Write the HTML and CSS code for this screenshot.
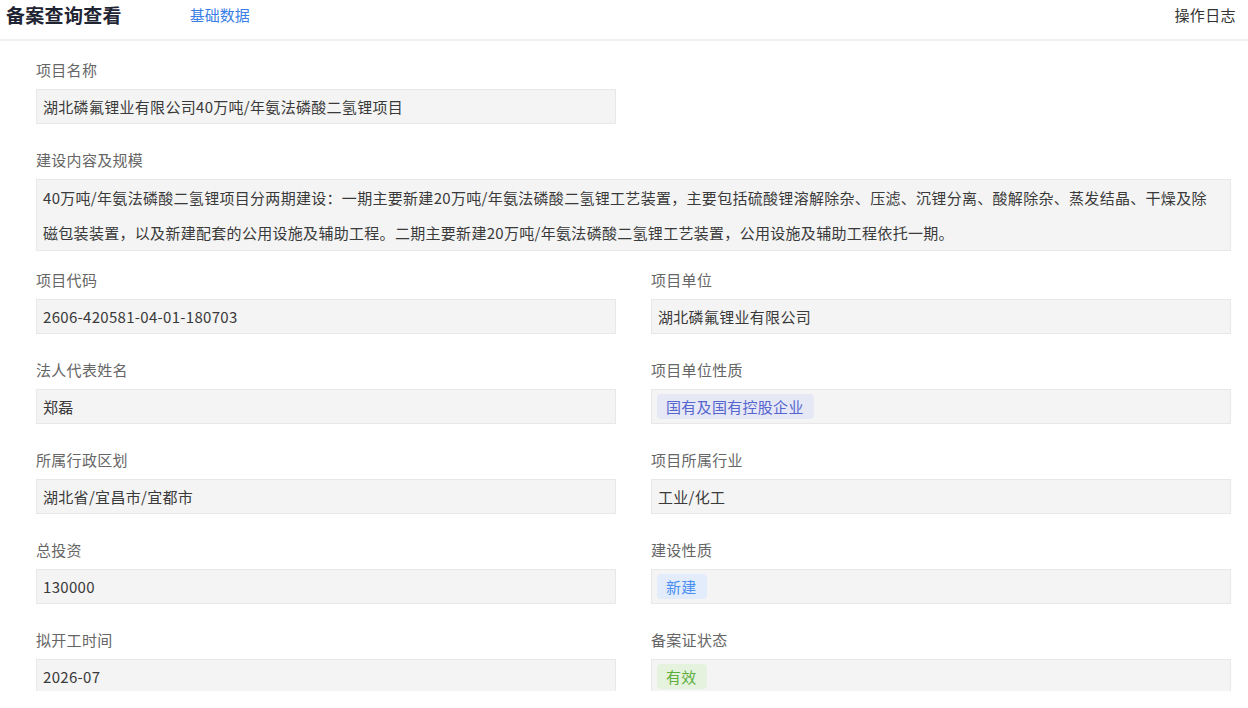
FILE: index.html
```html
<!DOCTYPE html>
<html lang="zh-CN">
<head>
    <meta charset="UTF-8">
    <title>备案查询查看</title>
    <link rel="stylesheet" href="styles.css">
</head>
<body>
<div class="page">
    <!--顶部栏-->
    <div class="top">
        <span class="title">备案查询查看</span>
        <span class="tab">基础数据</span>
        <span class="log">操作日志</span>
    </div>
    <!--内容-->
    <div class="content">
        <div class="form">
            <div class="field wide">
                <div class="label">项目名称</div>
                <div class="box half">湖北磷氟锂业有限公司40万吨/年氨法磷酸二氢锂项目</div>
            </div>
            <div class="field full desc">
                <div class="label">建设内容及规模</div>
                <div class="box text">40万吨/年氨法磷酸二氢锂项目分两期建设：一期主要新建20万吨/年氨法磷酸二氢锂工艺装置，主要包括硫酸锂溶解除杂、压滤、沉锂分离、酸解除杂、蒸发结晶、干燥及除磁包装装置，以及新建配套的公用设施及辅助工程。二期主要新建20万吨/年氨法磷酸二氢锂工艺装置，公用设施及辅助工程依托一期。</div>
            </div>
            <div class="field">
                <div class="label">项目代码</div>
                <div class="box">2606-420581-04-01-180703</div>
            </div>
            <div class="field">
                <div class="label">项目单位</div>
                <div class="box">湖北磷氟锂业有限公司</div>
            </div>
            <div class="field">
                <div class="label">法人代表姓名</div>
                <div class="box">郑磊</div>
            </div>
            <div class="field">
                <div class="label">项目单位性质</div>
                <div class="box"><span class="tag purple">国有及国有控股企业</span></div>
            </div>
            <div class="field">
                <div class="label">所属行政区划</div>
                <div class="box">湖北省/宜昌市/宜都市</div>
            </div>
            <div class="field">
                <div class="label">项目所属行业</div>
                <div class="box">工业/化工</div>
            </div>
            <div class="field">
                <div class="label">总投资</div>
                <div class="box">130000</div>
            </div>
            <div class="field">
                <div class="label">建设性质</div>
                <div class="box"><span class="tag blue">新建</span></div>
            </div>
            <div class="field">
                <div class="label">拟开工时间</div>
                <div class="box">2026-07</div>
            </div>
            <div class="field">
                <div class="label">备案证状态</div>
                <div class="box"><span class="tag green">有效</span></div>
            </div>
        </div>
    </div>
</div>
</body>
</html>
```

FILE: styles.css
```css
body, div, span {
    margin: 0;
    padding: 0;
}

body {
    background: #fff;
    font-family: "Microsoft YaHei", "Noto Sans CJK SC", "Noto Sans", sans-serif;
    color: #333;
}

.page {
    width: 1248px;
    height: 708px;
    overflow: hidden;
}

.top {
    height: 30px;
    line-height: 30px;
    padding: 0 12px 9px 6px;
    border-bottom: 2px solid #f2f2f2;
    display: flex;
    align-items: center;
}

.top .title {
    font-size: 19px;
    font-weight: bold;
    color: #1f2533;
    letter-spacing: 0.3px;
}

.top .tab {
    margin-left: 68px;
    font-size: 15px;
    color: #3b7fe6;
}

.top .log {
    margin-left: auto;
    font-size: 15px;
    color: #333;
    letter-spacing: 0.4px;
}

.content {
    height: 650px;
    overflow: hidden;
    padding: 19px 17px 0 36px;
    box-sizing: border-box;
}

.form {
    display: grid;
    grid-template-columns: 580px 580px;
    column-gap: 35px;
}

.field {
    margin-bottom: 26px;
}

.field.wide,
.field.full {
    grid-column: 1 / 3;
}

.field.desc {
    margin-bottom: 19px;
}

.label {
    height: 20px;
    line-height: 20px;
    font-size: 15px;
    color: #666;
    letter-spacing: 0.3px;
    margin-bottom: 9px;
}

.box {
    height: 35px;
    line-height: 33px;
    box-sizing: border-box;
    border: 1px solid #e8e8e8;
    background: #f4f4f4;
    padding-left: 6px;
    font-size: 15px;
    color: #3a3a3a;
    letter-spacing: 0.3px;
    white-space: nowrap;
    overflow: hidden;
}

.box.half {
    width: 580px;
}

.box.text {
    height: auto;
    line-height: 35px;
    white-space: normal;
    padding-right: 13px;
}

.tag {
    display: inline-block;
    height: 25px;
    line-height: 25px;
    padding: 0 10px 0 9px;
    margin-left: -1px;
    border-radius: 4px;
    vertical-align: middle;
    position: relative;
    top: -2px;
}

.tag.purple {
    background: #e6e8f6;
    color: #5666cf;
}

.tag.blue {
    background: #e2ecfb;
    color: #4a8ff0;
}

.tag.green {
    background: #e5f2de;
    color: #5daf3e;
}
```
